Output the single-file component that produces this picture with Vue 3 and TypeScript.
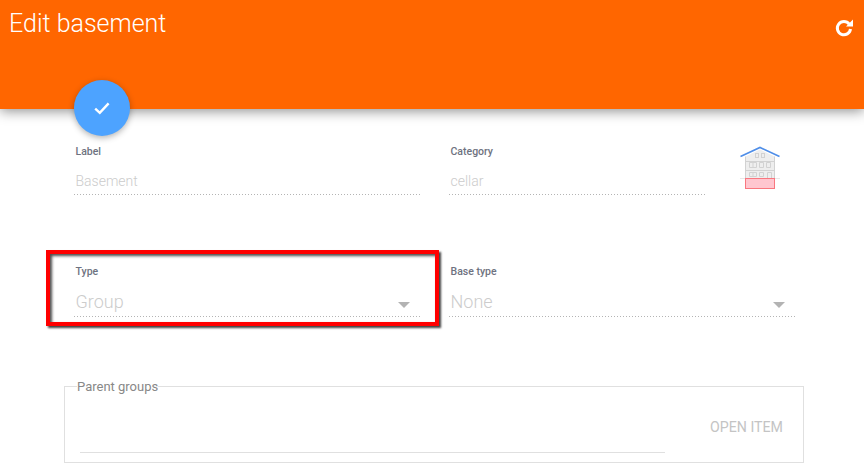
<script setup lang="ts">
const row1 = { label: 'Basement', category: 'cellar' }
</script>

<template>
  <div class="page">
    <header class="head">
      <h1 class="title">Edit basement</h1>
      <svg class="refresh" viewBox="0 0 24 24" width="24" height="24">
        <path fill="none" stroke="#fff" stroke-width="3" d="M17.2 8.200A6.600 6.600 0 1 0 18.500 13" />
        <path fill="#fff" d="M14 10.600 21 10.600 21 3.600Z" />
      </svg>
      <button class="fab" type="button" aria-label="Save">
        <svg viewBox="0 0 24 24" width="24" height="24">
          <path fill="none" stroke="#fff" stroke-width="2.4" d="M5.2 12.6 9.8 16.8 18.6 7.4" />
        </svg>
      </button>
    </header>

    <main class="body">
      <div class="row first">
        <div class="field wide">
          <label class="lab">Label</label>
          <div class="val small">{{ row1.label }}</div>
        </div>
        <div class="field cat">
          <label class="lab">Category</label>
          <div class="val small">{{ row1.category }}</div>
        </div>
        <svg class="house" viewBox="0 0 40 43" width="40" height="43">
          <path fill="#eeeeee" d="M5.5 10.5 20 3.5 34.5 10.5V32H5.500Z" />
          <g fill="none" stroke="#d2d2d2" stroke-width="1">
            <path d="M5.500 10.500V32M34.500 10.500V32M5.500 15.500H34.500M5.500 24.500H34.500" />
            <rect x="15.500" y="7.500" width="3" height="4" />
            <rect x="21.500" y="7.500" width="3" height="4" />
            <path d="M9.500 16.500h7v5h-7zM13 16.500v5M19.500 16.500h4v5h-4zM26.500 16.500h4v5h-4z" />
            <path d="M9.500 26.500h7v4h-7zM13 26.500v4M19.500 26.500h4v4h-4zM27.500 26.500h4v6h-4z" />
          </g>
          <path fill="none" stroke="#4f8ee8" stroke-width="1.600" d="M0.500 10.500 20 1.500 39.500 10.500" />
          <path stroke="#e8e8e8" d="M0 32.500H5M35 32.500H40" />
          <rect x="5.500" y="32.500" width="29" height="10" fill="#ffc6cf" stroke="#f9777f" />
        </svg>
      </div>

      <div class="row second">
        <div class="field wide">
          <label class="lab">Type</label>
          <div class="val big">Group<span class="caret"></span></div>
        </div>
        <div class="field wide">
          <label class="lab">Base type</label>
          <div class="val big">None<span class="caret"></span></div>
        </div>
        <div class="highlight"></div>
      </div>

      <fieldset class="groups">
        <legend class="legend">Parent groups</legend>
        <div class="groups-in">
          <div class="line"></div>
          <span class="open">OPEN ITEM</span>
        </div>
      </fieldset>
    </main>
  </div>
</template>

<style>
html, body { margin: 0; background: #fff; overflow: hidden; }
</style>

<style scoped>
.page {
  width: 864px;
  height: 464px;
  overflow: hidden;
  font-family: Roboto, "Liberation Sans", sans-serif;
}
.head {
  position: relative;
  height: 109px;
  background: #ff6600;
  box-shadow: 0 2px 12px rgba(0, 0, 0, 0.45);
  display: flex;
  justify-content: space-between;
  align-items: flex-start;
  padding: 0 8px 0 9px;
  box-sizing: border-box;
}
.title {
  margin: 0;
  padding-top: 9px;
  font-size: 25px;
  line-height: 30px;
  font-weight: 300;
  color: #fff;
}
.refresh { margin-top: 16px; }
.fab {
  position: absolute;
  left: 74px;
  top: 80px;
  width: 56px;
  height: 56px;
  padding: 0;
  border: 0;
  border-radius: 50%;
  background: #4da3ff;
  box-shadow: 0 2px 6px rgba(0, 0, 0, 0.3);
  display: flex;
  align-items: center;
  justify-content: center;
}
.body { padding: 36px 0 0 64px; }
.row {
  display: flex;
  padding-left: 10px;
  gap: 29px;
  position: relative;
}
.first { height: 98px; }
.second { height: 114px; margin-top: 22px; }
.field { display: flex; flex-direction: column; }
.wide { width: 346px; }
.cat { width: 257px; }
.lab {
  padding-left: 1.500px;
  font-size: 10.500px;
  line-height: 14px;
  font-weight: 500;
  color: #6e7280;
}
.val {
  position: relative;
  padding-left: 1.500px;
  background: repeating-linear-gradient(90deg, #b4b4b4 0 1px, transparent 1px 3px) left bottom / 100% 1px no-repeat;
  color: #cccccc;
  font-weight: 300;
}
.small { margin-top: 10px; height: 26px; font-size: 14px; line-height: 24px; }
.big { margin-top: 8px; height: 30px; font-size: 18px; line-height: 30px; }
.caret {
  position: absolute;
  right: 10px;
  top: 15px;
  width: 0;
  height: 0;
  border-left: 6.500px solid transparent;
  border-right: 6.500px solid transparent;
  border-top: 6.500px solid #b3b3b3;
}
.house { margin: 0 0 0 5px; position: relative; top: 1px; }
.highlight {
  position: absolute;
  left: -18px;
  top: -15px;
  width: 393px;
  height: 76px;
  box-sizing: border-box;
  border: 4px solid #ff0000;
  box-shadow: 2px 2px 2px rgba(0, 0, 0, 0.75), inset 2px 2px 3px rgba(0, 0, 0, 0.7);
  pointer-events: none;
}
.groups {
  width: 740px;
  height: 84px;
  margin: 0;
  padding: 0;
  box-sizing: border-box;
  border: 1px solid #e0e0e0;
}
.legend {
  margin-left: 12px;
  padding: 0;
  font-size: 13px;
  line-height: 15px;
  color: #888;
}
.groups-in {
  display: flex;
  align-items: flex-end;
  padding: 0 20px 0 15px;
  height: 68px;
}
.line { width: 585px; border-bottom: 1px solid #e0e0e0; margin-bottom: 9px; }
.open {
  margin-left: auto;
  font-size: 14.200px;
  line-height: 16px;
  font-weight: 400;
  color: #c4c4c4;
  margin-bottom: 27px;
}
</style>
